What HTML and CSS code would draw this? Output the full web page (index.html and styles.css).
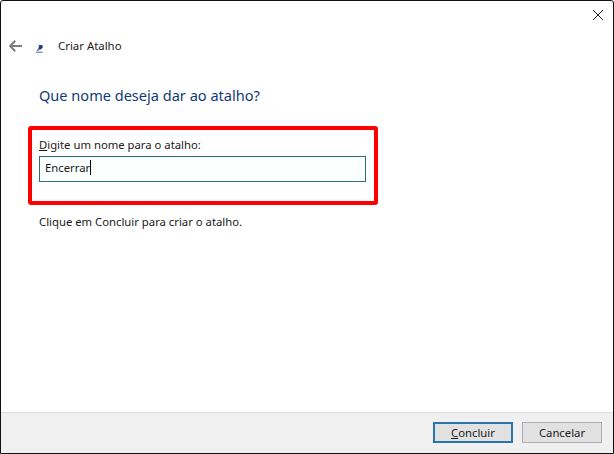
FILE: index.html
```html
<!DOCTYPE html>
<html lang="pt">
<head>
<meta charset="utf-8">
<title>Criar Atalho</title>
<link rel="stylesheet" href="styles.css">
</head>
<body>
<div class="window">
  <div class="titlebar">
    <button class="close" aria-label="Fechar">
      <svg width="10" height="10" viewBox="0 0 10 10"><path d="M0 0L10 10M10 0L0 10" stroke="#222" stroke-width="1" fill="none"/></svg>
    </button>
  </div>
  <div class="nav">
    <svg class="back" width="13" height="12" viewBox="0 0 13 12"><path d="M6.200 .7L1.200 6 6.200 11.300M1.200 6H13" stroke="#7d7d7d" stroke-width="2" fill="none"/></svg>
    <svg class="wizicon" width="7" height="8" viewBox="0 0 7 8"><path d="M3 0H6L7 2 5 4.500H3.500L1.500 6 1 5.500 2.500 3.500Z" fill="#23427f"/><path d="M0 6.500H6.500V8H0Z" fill="#7f97b8"/></svg>
    <span class="navtitle">Criar Atalho</span>
  </div>
  <main class="content">
    <h1 class="heading">Que nome deseja dar ao atalho?</h1>
    <div class="highlight">
      <label class="label" for="name"><u>D</u>igite um nome para o atalho:</label>
      <div class="input" id="name"><span>Encerrar</span><i class="caret"></i></div>
    </div>
    <p class="hint">Clique em Concluir para criar o atalho.</p>
  </main>
  <footer class="footer">
    <button class="btn primary"><u>C</u>oncluir</button>
    <button class="btn">Cancelar</button>
  </footer>
</div>
</body>
</html>
```
FILE: styles.css
```css
* { box-sizing: border-box; }
html, body { margin: 0; height: 100%; }
body { width: 614px; height: 454px; overflow: hidden; background: #fff; font-family: "Noto Sans", "Open Sans", sans-serif; color: #1a1a1a; }
.window { width: 614px; height: 454px; display: flex; flex-direction: column; background: #fff; border: 1px solid #111; border-radius: 3px 3px 0 0; }
.titlebar { height: 30px; display: flex; justify-content: flex-end; }
.close { width: 30px; height: 30px; padding: 0 0 2px; border: 0; background: none; display: flex; align-items: center; justify-content: center; }
.nav { height: 30px; display: flex; align-items: center; }
.back { margin-left: 8px; }
.wizicon { margin-left: 14px; margin-top: 5px; }
.navtitle { margin-left: 15px; font-size: 11.4px; line-height: 30px; }
.content { flex: 1; padding: 23px 0 0 27px; }
.heading { margin: 0 0 20px 11px; font-size: 14.55px; line-height: 22px; font-weight: 400; color: #0f3a78; }
.highlight { width: 350px; height: 79px; padding: 7px 0 0 7px; border: 4px solid #f00; border-radius: 3px; }
.label { display: block; font-size: 11.3px; line-height: 16px; }
.input { width: 327px; height: 26px; margin-top: 3px; padding: 0 0 4px 5px; display: flex; align-items: center; border: 1px solid #2d6b7f; background: #fbfffe; font-size: 11.3px; }
.caret { display: inline-block; width: 1px; height: 15px; background: #000; }
.hint { margin: 9px 0 0 11px; font-size: 11.3px; line-height: 16px; }
.footer { height: 41px; display: flex; justify-content: flex-end; align-items: flex-start; gap: 9px; padding: 9px 11px 0 0; background: #f0f0f0; border-top: 1px solid #dfdfdf; }
.btn { width: 80px; height: 21px; padding: 0; font: 11.3px/17px "Noto Sans", "Open Sans", sans-serif; color: #1a1a1a; background: #e1e1e1; border: 1px solid #adadad; }
.primary { border: 2px solid #2a75ad; line-height: 15px; }
```
